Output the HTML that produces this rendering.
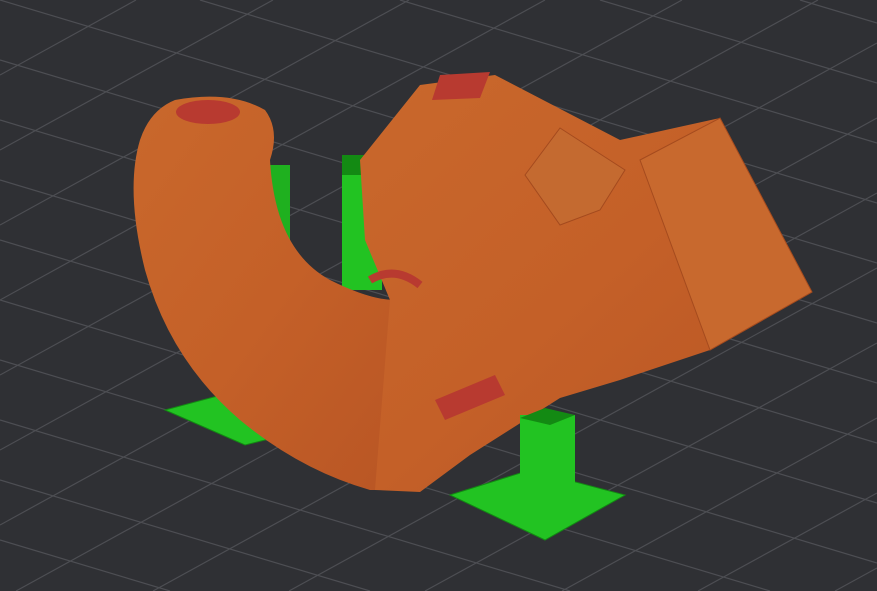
<!DOCTYPE html>
<html><head><meta charset="utf-8"><style>
html,body{margin:0;padding:0;background:#2f3034;width:877px;height:591px;overflow:hidden}
svg{display:block}
</style></head><body>
<svg width="877" height="591" viewBox="0 0 877 591" xmlns="http://www.w3.org/2000/svg">
<defs>
<linearGradient id="og" x1="0" y1="0" x2="1" y2="1">
<stop offset="0" stop-color="#c9682c"/><stop offset="0.5" stop-color="#c46028"/><stop offset="1" stop-color="#b85524"/>
</linearGradient>
</defs>
<rect width="877" height="591" fill="#2f3034"/>
<g stroke="#4d4e53" stroke-width="1.2">
<line x1="800" y1="0" x2="877" y2="23"/>
<line x1="600" y1="0" x2="877" y2="83"/>
<line x1="400" y1="0" x2="877" y2="143"/>
<line x1="200" y1="0" x2="877" y2="203"/>
<line x1="0" y1="0" x2="877" y2="263"/>
<line x1="0" y1="60" x2="877" y2="323"/>
<line x1="0" y1="120" x2="877" y2="383"/>
<line x1="0" y1="180" x2="877" y2="443"/>
<line x1="0" y1="240" x2="877" y2="503"/>
<line x1="0" y1="300" x2="877" y2="563"/>
<line x1="0" y1="360" x2="770" y2="591"/>
<line x1="0" y1="420" x2="570" y2="591"/>
<line x1="0" y1="480" x2="370" y2="591"/>
<line x1="0" y1="540" x2="170" y2="591"/>
<line x1="0" y1="75" x2="136" y2="0"/>
<line x1="0" y1="150" x2="273" y2="0"/>
<line x1="0" y1="225" x2="409" y2="0"/>
<line x1="0" y1="300" x2="545" y2="0"/>
<line x1="0" y1="375" x2="682" y2="0"/>
<line x1="0" y1="450" x2="818" y2="0"/>
<line x1="0" y1="525" x2="877" y2="43"/>
<line x1="16" y1="591" x2="877" y2="118"/>
<line x1="153" y1="591" x2="877" y2="193"/>
<line x1="289" y1="591" x2="877" y2="268"/>
<line x1="425" y1="591" x2="877" y2="343"/>
<line x1="562" y1="591" x2="877" y2="418"/>
<line x1="698" y1="591" x2="877" y2="493"/>
<line x1="835" y1="591" x2="877" y2="568"/>
</g>
<polygon points="165,410 240,390 285,435 245,445" fill="#22c322" stroke="#138a13"/>
<rect x="268" y="165" width="22" height="80" fill="#1fb01f"/>
<rect x="342" y="160" width="40" height="130" fill="#22c322"/>
<rect x="342" y="155" width="40" height="20" fill="#138a13"/>
<path d="M175,100 Q230,90 265,110 Q280,130 270,160 Q275,250 330,280 Q370,300 395,300 L420,490 L370,490 Q300,470 240,420 Q170,360 145,270 Q125,190 140,140 Q150,110 175,100 Z" fill="url(#og)"/>
<ellipse cx="208" cy="112" rx="32" ry="12" fill="#b83a30"/>
<polygon points="360,160 420,85 495,75 620,140 720,118 812,292 710,350 620,380 560,398 470,455 420,492 375,490 390,300 365,240" fill="url(#og)"/>
<polygon points="432,100 440,75 490,72 480,98" fill="#b83a30"/>
<polygon points="525,175 560,128 625,170 600,210 560,225" fill="#c46a30" stroke="#a44a1e"/>
<polygon points="640,160 720,118 812,292 710,350" fill="#c8692e" stroke="#a54b1e" stroke-width="1"/>
<polygon points="435,400 495,375 505,395 445,420" fill="#b83a30"/>
<path d="M370,280 Q395,265 420,285" stroke="#b83a30" stroke-width="8" fill="none"/>
<polygon points="450,495 530,470 625,495 545,540" fill="#22c322" stroke="#138a13"/>
<rect x="520" y="415" width="55" height="92" fill="#22c322"/>
<polygon points="520,418 545,408 575,415 550,425" fill="#138a13"/>
</svg>
</body></html>
